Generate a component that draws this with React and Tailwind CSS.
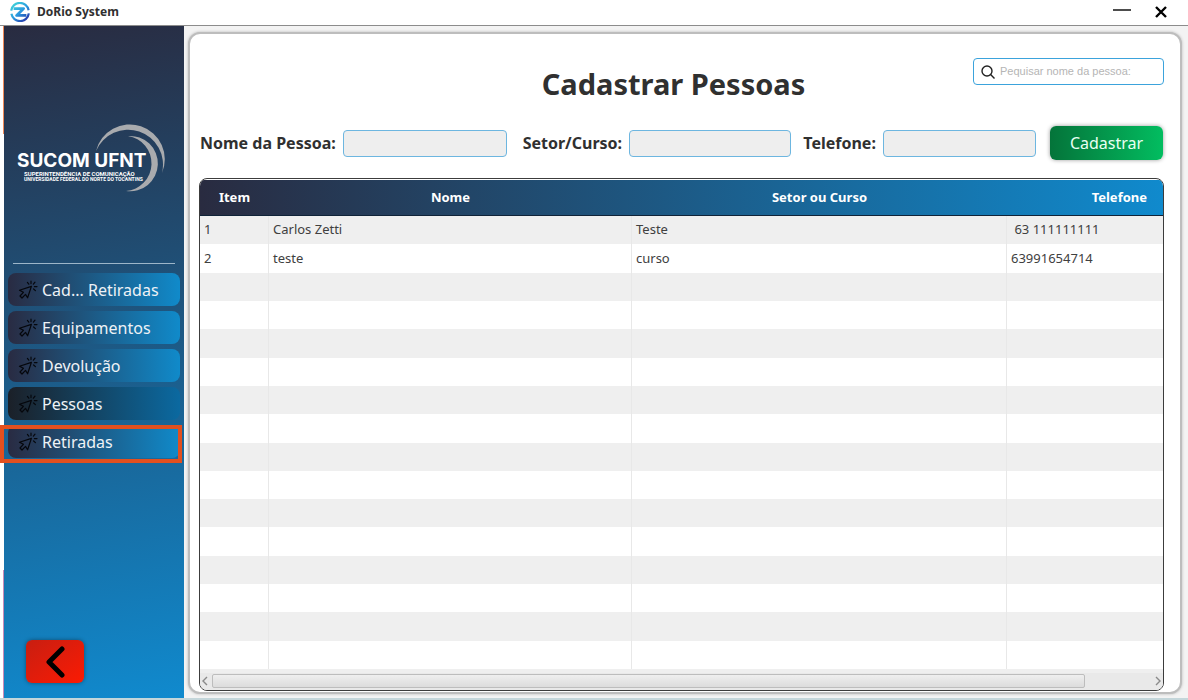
import React from "react";

const people = [
  { item: "1", name: "Carlos Zetti", sector: "Teste", phone: "\u00a063 111111111" },
  { item: "2", name: "teste", sector: "curso", phone: "63991654714" },
];
const EMPTY_ROWS = 14;

const menu = [
  { label: "Cad... Retiradas" },
  { label: "Equipamentos" },
  { label: "Devolução" },
  { label: "Pessoas", active: true },
  { label: "Retiradas", highlighted: true },
];

function AppLogo() {
  return (
    <svg viewBox="0 0 20 20" className="size-5" aria-hidden="true">
      <defs>
        <linearGradient id="ring" gradientUnits="userSpaceOnUse" x1="3" y1="2" x2="17" y2="18">
          <stop offset="0" stopColor="#3fd0d8" />
          <stop offset="0.5" stopColor="#2a9be0" />
          <stop offset="1" stopColor="#2536a8" />
        </linearGradient>
      </defs>
      <g fill="none" stroke="url(#ring)">
        <path d="M1.2 8.6A8.8 8.8 0 0 1 18.6 8.2" strokeWidth="2.2" />
        <path d="M18.8 11.4A8.8 8.8 0 0 1 1.4 11.8" strokeWidth="2.2" />
        <path d="M3.6 6.6H13.6L6.6 13.4H16.4" strokeWidth="2.8" strokeLinejoin="round" />
      </g>
    </svg>
  );
}

function SucomLogo() {
  return (
    <svg viewBox="14 120 156 76" className="w-[156px]" role="img" aria-label="SUCOM UFNT">
      <g fill="#a9abae">
        <path d="M96 151A34.9 34.9 0 1 1 162 173A34.9 34.9 0 0 0 96 151Z" />
        <path d="M128 136A27.7 27.7 0 1 1 126 191A27.7 27.7 0 0 0 128 136Z" />
      </g>
      <g fill="#fff" className="font-bold">
        <text x="17" y="167" fontSize="19" className="font-['Inter',sans-serif]">SUCOM UFNT</text>
        <text x="24" y="176" fontSize="6" className="font-['Roboto',sans-serif]">SUPERINTENDÊNCIA DE COMUNICAÇÃO</text>
        <text x="24" y="181" fontSize="5" className="font-['Roboto',sans-serif]">UNIVERSIDADE FEDERAL DO NORTE DO TOCANTINS</text>
      </g>
    </svg>
  );
}

function ClickIcon() {
  return (
    <svg viewBox="0 0 20 20" className="size-5 shrink-0" fill="none" stroke="#05070c" strokeWidth="1.2" strokeLinecap="round" strokeLinejoin="round" aria-hidden="true">
      <path d="M13.4 6.4L1.5 10.3L5.4 12.3L2 16L4 18L7.5 14.4L9.6 17.8Z" />
      <path d="M13 1.2V3.6M9.4 2.4L10.8 4.2M17 2.2L15.4 4.2M16.4 6.6H19M15.6 9L17.4 10.6" />
    </svg>
  );
}

function MenuButton({ label, active, highlighted }) {
  return (
    <div className="relative">
      <button
        type="button"
        className={
          "flex h-[33px] w-full items-center gap-1 rounded-lg pl-2.5 text-left text-base text-[#eef2f6] " +
          (active
            ? "bg-linear-to-r/srgb from-[#1b2028] to-[#0b69a0]"
            : "bg-linear-to-r/srgb from-[#292b42] to-[#108aca]")
        }
      >
        <ClickIcon />
        {label}
      </button>
      {highlighted && (
        <span className="pointer-events-none absolute top-0 -right-0.5 -bottom-[5px] -left-2 border-4 border-[#e2501f]" />
      )}
    </div>
  );
}

function Field({ id, label, className }) {
  return (
    <div className={"flex items-center gap-[7px] " + className}>
      <label htmlFor={id} className="text-base font-bold whitespace-nowrap">{label}</label>
      <input id={id} type="text" className="h-[27px] w-0 min-w-0 flex-1 rounded border border-[#6db6e0] bg-[#eeeeee] px-2" />
    </div>
  );
}

function Sidebar() {
  return (
    <aside className="flex w-[180px] shrink-0 flex-col bg-[linear-gradient(170deg,#292b40,#108ace)] px-1">
      <div className="ml-1.5 pt-[94px]">
        <SucomLogo />
      </div>
      <hr className="mx-[5px] mt-[67px] border-[#9db6c9]" />
      <nav className="mt-[9px] flex flex-col gap-[5px]">
        {menu.map((m) => <MenuButton key={m.label} {...m} />)}
      </nav>
      <button type="button" aria-label="Voltar" className="mt-auto mb-[15px] ml-[18px] flex h-[43px] w-[58px] items-center justify-center rounded-md bg-linear-to-br from-[#c81e10] to-[#fb1a02] shadow-[0_0_4px_#00000066]">
        <svg viewBox="0 0 20 32" className="h-8 w-5" fill="none" stroke="#000" strokeWidth="5" strokeLinecap="round" strokeLinejoin="round" aria-hidden="true">
          <path d="M17 3L4 16L17 29" />
        </svg>
      </button>
    </aside>
  );
}

function PeopleTable() {
  const cell = "border-r border-[#e8e8e8] px-1 last:border-r-0";
  const head = "border-b border-[#102338]";
  return (
    <div className="flex min-h-0 flex-1 flex-col overflow-hidden rounded-lg border border-[#3c3c3c] bg-white pt-px">
      <div className="min-h-0 flex-1 overflow-hidden">
        <table className="h-full w-full table-fixed border-separate border-spacing-0 text-left text-[13px] text-[#404040]">
          <colgroup>
            <col className="w-[69px]" />
            <col className="w-[363px]" />
            <col className="w-[375px]" />
            <col />
          </colgroup>
          <thead>
            <tr className="h-9 bg-linear-to-r/srgb from-[#292b40] to-[#108acd] text-center text-white">
              <th className={head}>Item</th>
              <th className={head}>Nome</th>
              <th className={head}>Setor ou Curso</th>
              <th className={head + " pr-4 text-right"}>Telefone</th>
            </tr>
          </thead>
          <tbody>
            {people.map((p) => (
              <tr key={p.item} className="odd:bg-[#efefef]">
                <td className={cell}>{p.item}</td>
                <td className={cell}>{p.name}</td>
                <td className={cell}>{p.sector}</td>
                <td className={cell}>{p.phone}</td>
              </tr>
            ))}
            {Array.from({ length: EMPTY_ROWS }, (_, i) => (
              <tr key={i} className="odd:bg-[#efefef]">
                <td className={cell}>&nbsp;</td>
                <td className={cell} />
                <td className={cell} />
                <td className={cell} />
              </tr>
            ))}
          </tbody>
        </table>
      </div>
      <div className="flex h-[21px] shrink-0 items-center gap-1 border-t-4 border-[#efefef] bg-[#e9e9e9] px-0.5 pb-0.5">
        <svg viewBox="0 0 6 10" className="h-2.5 w-1.5" fill="none" stroke="#8a8a8a" strokeWidth="1.4"><path d="M5 1L1 5L5 9" /></svg>
        <div className="h-3.5 flex-1">
          <div className="h-full w-[93%] rounded-xs border border-[#bdbdbd] bg-linear-to-b from-[#efefef] to-[#dcdcdc]" />
        </div>
        <svg viewBox="0 0 6 10" className="h-2.5 w-1.5" fill="none" stroke="#8a8a8a" strokeWidth="1.4"><path d="M1 1L5 5L1 9" /></svg>
      </div>
    </div>
  );
}

export default function App() {
  return (
    <div className="flex h-screen min-h-[640px] flex-col bg-white font-['Noto_Sans',sans-serif] text-[#303030]">
      <header className="flex h-[26px] shrink-0 items-center border-b border-[#8c8c8c] pr-[21px] pb-0.5 pl-2.5">
        <AppLogo />
        <span className="ml-[7px] text-xs font-bold">DoRio System</span>
        <button type="button" aria-label="Minimizar" className="ml-auto">
          <svg viewBox="0 0 18 14" className="h-3.5 w-[18px]" stroke="#000" strokeWidth="1.4"><path d="M0 5H18" /></svg>
        </button>
        <button type="button" aria-label="Fechar" className="ml-6">
          <svg viewBox="0 0 12 12" className="size-3" stroke="#000" strokeWidth="2.4"><path d="M1 1L11 11M11 1L1 11" /></svg>
        </button>
      </header>
      <div className="flex min-h-0 flex-1 border-b-2 border-[#c4d6da]">
        <div className="flex w-1 shrink-0 flex-col items-end justify-between">
          <div className="h-[16%] w-px bg-[#f08a5a]" />
          <div className="h-[19%] w-px bg-[#c98bb8]" />
        </div>
        <Sidebar />
        <main className="flex min-w-0 flex-1 bg-[#f3f3f3] pt-1.5 pr-1.5 pb-1 pl-1">
          <section className="flex min-w-0 flex-1 flex-col rounded-xl border-2 border-[#bdbdbd] bg-white pr-4 pb-px pl-[9px] shadow-[0_0_3px_#00000040]">
            <div className="mt-6 flex h-[54px] items-start">
              <div className="flex-1" />
              <h1 className="mt-2 mr-4 text-[29px] leading-9 font-bold">Cadastrar Pessoas</h1>
              <div className="flex flex-1 justify-end">
                <label className="flex h-[27px] w-[191px] items-center gap-1 rounded border border-[#3ba3dc] px-1.5">
                  <svg viewBox="0 0 16 16" className="size-4 shrink-0" fill="none" stroke="#222" strokeWidth="1.4"><circle cx="7" cy="7" r="5" /><path d="M10.6 10.6L14.5 14.5" /></svg>
                  <input type="search" aria-label="Pesquisar" placeholder="Pequisar nome da pessoa:" className="w-full min-w-0 font-['Liberation_Sans',sans-serif] text-[11px] outline-none placeholder:text-[#b5b5b5]" />
                </label>
              </div>
            </div>
            <form className="mt-3.5 flex items-center px-px" onSubmit={(e) => e.preventDefault()}>
              <Field id="nome" label="Nome da Pessoa:" className="flex-[307]" />
              <Field id="setor" label="Setor/Curso:" className="ml-4 flex-[269]" />
              <Field id="telefone" label="Telefone:" className="ml-3 flex-[233]" />
              <button type="submit" className="ml-3.5 h-[34px] w-[113px] rounded-md bg-linear-to-r from-[#04743a] to-[#02bd60] text-base text-[#e9fff2] shadow-[0_0_4px_#00000066]">Cadastrar</button>
            </form>
            <div className="mt-[18px] flex min-h-0 flex-1 flex-col">
              <PeopleTable />
            </div>
          </section>
        </main>
      </div>
    </div>
  );
}
